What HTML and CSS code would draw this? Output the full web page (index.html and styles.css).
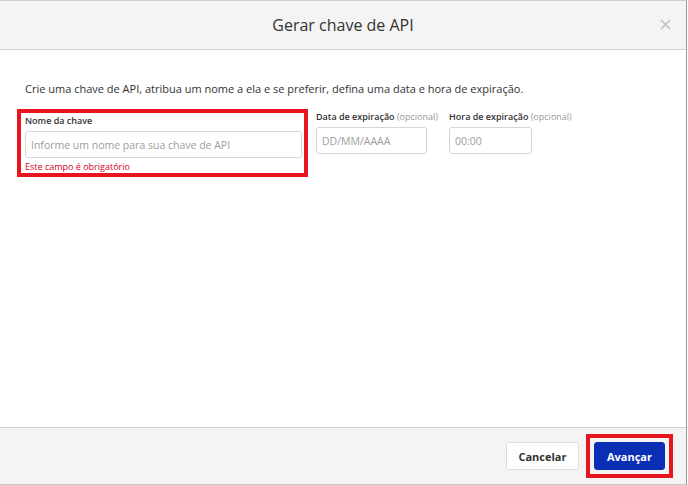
FILE: index.html
```html
<!DOCTYPE html>
<html lang="pt-BR">
<head>
    <meta charset="UTF-8">
    <meta name="viewport" content="width=device-width, initial-scale=1.0">
    <title>Gerar chave de API</title>
    <link rel="stylesheet" href="styles.css">
</head>
<body>
    <div id="dialog">
        <div class="header">
            <h1>Gerar chave de API</h1>
            <button class="close" aria-label="Fechar">
                <svg width="11" height="11" viewBox="0 0 11 11"><path d="M1 1L10 10M10 1L1 10" stroke="#b9b9b9" stroke-width="1.2" fill="none"/></svg>
            </button>
        </div>
        <div class="content">
            <p class="intro">Crie uma chave de API, atribua um nome a ela e se preferir, defina uma data e hora de expiração.</p>
            <div class="fields">
                <div class="field highlight">
                    <label for="keyName">Nome da chave</label>
                    <input id="keyName" class="name-input" type="text" placeholder="Informe um nome para sua chave de API">
                    <span class="error">Este campo é obrigatório</span>
                </div>
                <div class="field date-field">
                    <label for="expDate">Data de expiração <span class="optional">(opcional)</span></label>
                    <input id="expDate" class="date-input" type="text" placeholder="DD/MM/AAAA">
                </div>
                <div class="field">
                    <label for="expTime">Hora de expiração <span class="optional">(opcional)</span></label>
                    <input id="expTime" class="time-input" type="text" placeholder="00:00">
                </div>
            </div>
        </div>
        <div class="footer">
            <button class="btn btn-cancel">Cancelar</button>
            <div class="highlight-btn">
                <button class="btn btn-primary">Avançar</button>
            </div>
        </div>
    </div>
</body>
</html>
```

FILE: styles.css
```css
body {
    margin: 0;
    padding: 0;
    font-family: "Open Sans", Arial, sans-serif;
    color: #333;
    background-color: white;
}

#dialog {
    width: 687px;
    height: 485px;
    display: flex;
    flex-direction: column;
    border-top: 1px solid #cfcfcf;
    border-right: 1px solid #9a9a9a;
    box-sizing: border-box;
}

.header {
    height: 48px;
    background-color: #f4f4f4;
    border-bottom: 1px solid #d0d0d0;
    display: flex;
    align-items: center;
    justify-content: center;
    position: relative;
}

.header h1 {
    margin: 0;
    font-size: 16px;
    font-weight: 500;
    color: #333;
}

.close {
    position: absolute;
    right: 15px;
    top: 17px;
    padding: 0;
    border: none;
    background: none;
    cursor: pointer;
}

.content {
    flex: 1;
    padding: 31px 17px 0;
}

.intro {
    margin: 0 0 12px 8px;
    font-size: 11px;
    line-height: 16px;
}

.fields {
    display: flex;
    align-items: flex-start;
}

.field {
    display: flex;
    flex-direction: column;
}

.field label {
    font-size: 9px;
    font-weight: 600;
    line-height: 13px;
    margin-top: 1px;
    margin-bottom: 4px;
    white-space: nowrap;
}

.optional {
    font-weight: 400;
    color: #999;
}

.highlight {
    border: 4px solid #e8141e;
    padding: 0 2px 0 4px;
    margin-right: 8px;
}

.date-field {
    width: 119px;
    margin-right: 14px;
}

input {
    height: 27px;
    box-sizing: border-box;
    border: 1px solid #d6d6d6;
    border-radius: 3px;
    padding: 0 5px;
    font-family: "Open Sans", Arial, sans-serif;
    font-size: 10.5px;
    color: #333;
}

input::placeholder {
    color: #9d9d9d;
}

.name-input {
    width: 277px;
}

.date-input {
    width: 111px;
}

.time-input {
    width: 83px;
}

.error {
    font-size: 9px;
    line-height: 13px;
    color: #d0021b;
    margin-top: 2px;
}

.footer {
    height: 56px;
    background-color: #f4f4f4;
    border-top: 1px solid #d0d0d0;
    border-bottom: 1px solid #c8c8c8;
    display: flex;
    justify-content: flex-end;
    align-items: center;
    padding-right: 13px;
}

.btn {
    height: 28px;
    border-radius: 3px;
    font-family: "Open Sans", Arial, sans-serif;
    font-size: 11px;
    font-weight: 700;
    cursor: pointer;
}

.btn-cancel {
    width: 73px;
    background-color: white;
    border: 1px solid #dcdcdc;
    color: #333;
    margin-right: 7px;
}

.highlight-btn {
    border: 4px solid #e8141e;
    padding: 4px;
    display: flex;
}

.btn-primary {
    width: 71px;
    background-color: #0a2fb5;
    border: 1px solid #0a2fb5;
    color: white;
}
```
